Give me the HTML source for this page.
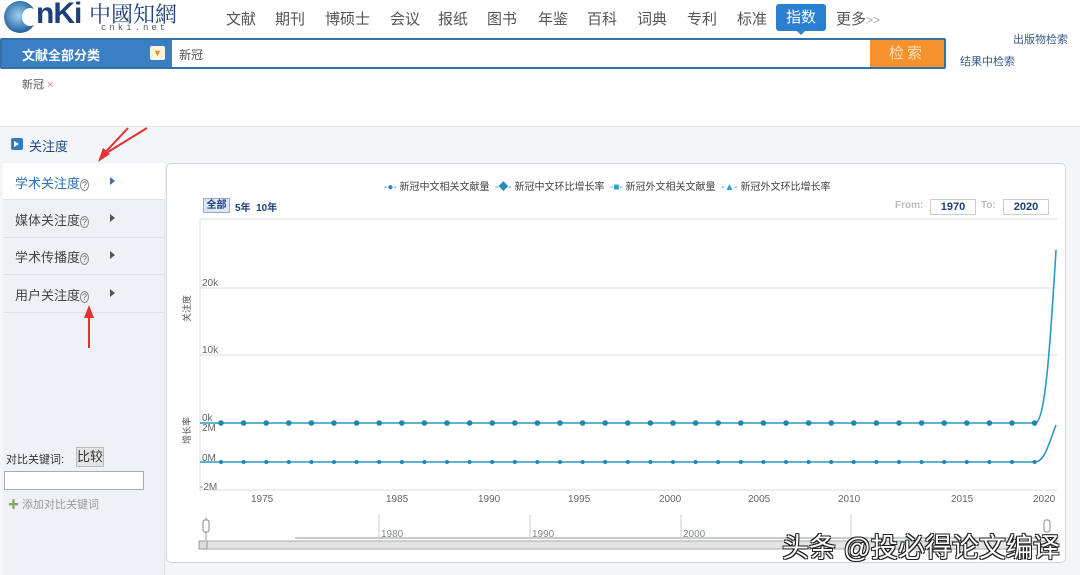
<!DOCTYPE html>
<html><head><meta charset="utf-8"><style>
*{margin:0;padding:0;box-sizing:border-box}
body{width:1080px;height:575px;overflow:hidden;background:#fff;font-family:"Liberation Sans","Noto Sans CJK SC",sans-serif;position:relative;color:#333}
.a{position:absolute;white-space:nowrap}
.nav{top:8px;font-size:15px;color:#555}
</style></head><body>
<!-- logo -->
<div class="a" style="left:4px;top:1px;width:32px;height:32px;border-radius:50%;background:radial-gradient(circle at 45% 45%,#9fd0f0,#2a6aa8 65%,#1a3f70);"></div>
<div class="a" style="left:22px;top:8px;width:16px;height:18px;background:#fff;border-radius:50%"></div>
<div class="a" style="left:36px;top:-3px;font:bold 30px 'Liberation Sans',sans-serif;color:#1d3f7a;letter-spacing:-1px">nKi</div>
<div class="a" style="left:89px;top:-2px;font:22px 'Noto Serif CJK SC',serif;color:#1d3f7a">中國知網</div>
<div class="a" style="left:101px;top:23px;font:9px 'Liberation Mono',monospace;color:#555;letter-spacing:3px">cnki.net</div>
<div class="a nav" style="left:226px">文献</div>
<div class="a nav" style="left:275px">期刊</div>
<div class="a nav" style="left:325px">博硕士</div>
<div class="a nav" style="left:390px">会议</div>
<div class="a nav" style="left:438px">报纸</div>
<div class="a nav" style="left:487px">图书</div>
<div class="a nav" style="left:538px">年鉴</div>
<div class="a nav" style="left:587px">百科</div>
<div class="a nav" style="left:637px">词典</div>
<div class="a nav" style="left:687px">专利</div>
<div class="a nav" style="left:737px">标准</div>
<div class="a" style="left:776px;top:4px;width:50px;height:27px;background:#2a7fd0;border-radius:3px;color:#fff;font-size:15px;text-align:center;line-height:27px">指数</div>
<div class="a" style="left:796px;top:30px;border:5px solid transparent;border-top-color:#2a7fd0"></div>
<div class="a nav" style="left:836px">更多<span style="color:#aaa;font-size:12px">&gt;&gt;</span></div>
<!-- search -->
<div class="a" style="left:0;top:38px;width:946px;height:31px;background:#3a7fc4;border:2px solid #3570a8;border-radius:2px"></div>
<div class="a" style="left:22px;top:45px;color:#fff;font-weight:bold;font-size:13px">文献全部分类</div>
<div class="a" style="left:150px;top:46px;width:15px;height:14px;background:#fff4dc;border-radius:2px;color:#e09020;font-size:9px;text-align:center;line-height:14px">▼</div>
<div class="a" style="left:172px;top:40px;width:698px;height:27px;background:#fff"></div>
<div class="a" style="left:179px;top:46px;font-size:12px;color:#555">新冠</div>
<div class="a" style="left:870px;top:40px;width:74px;height:27px;background:#f5922e;color:#fde0c0;font-size:15px;text-align:center;line-height:27px;letter-spacing:3px">检索</div>
<div class="a" style="left:1013px;top:31px;font-size:11px;color:#3a5a8a">出版物检索</div>
<div class="a" style="left:960px;top:53px;font-size:11px;color:#3a5a8a">结果中检索</div>
<div class="a" style="left:22px;top:76px;font-size:11px;color:#555">新冠 <span style="color:#e08090">×</span></div>
<!-- panel -->
<div class="a" style="left:0;top:126px;width:1080px;height:449px;background:#f3f5f8;border-top:1px solid #e0e4ea"></div>
<div class="a" style="left:11px;top:138px;width:12px;height:12px;background:#2a7fc4;border-radius:2px"></div>
<div class="a" style="left:14px;top:141px;border:3px solid transparent;border-left:5px solid #fff"></div>
<div class="a" style="left:29px;top:136px;font-size:13px;color:#1d4a80">关注度</div>
<div class="a" style="left:3px;top:162px;width:162px;height:413px;background:#eef2f7;border-right:1px solid #dde2ea"></div>
<div class="a" style="left:3px;top:163px;width:162px;height:37px;background:#fff;border-bottom:1px solid #dde2ea"></div>
<div class="a" style="left:3px;top:237px;width:162px;border-top:1px solid #dde2ea"></div>
<div class="a" style="left:3px;top:274px;width:162px;border-top:1px solid #dde2ea"></div>
<div class="a" style="left:3px;top:312px;width:162px;border-top:1px solid #dde2ea"></div>
<div class="a" style="left:15px;top:173px;font-size:13px;color:#2a70b0">学术关注度<span style="font-size:9px;border:1px solid #888;border-radius:50%;color:#666;padding:0 1px">?</span></div>
<div class="a" style="left:15px;top:210px;font-size:13px;color:#444">媒体关注度<span style="font-size:9px;border:1px solid #888;border-radius:50%;color:#666;padding:0 1px">?</span></div>
<div class="a" style="left:15px;top:247px;font-size:13px;color:#444">学术传播度<span style="font-size:9px;border:1px solid #888;border-radius:50%;color:#666;padding:0 1px">?</span></div>
<div class="a" style="left:15px;top:285px;font-size:13px;color:#444">用户关注度<span style="font-size:9px;border:1px solid #888;border-radius:50%;color:#666;padding:0 1px">?</span></div>
<div class="a" style="left:110px;top:177px;border:4px solid transparent;border-left:5px solid #3a70a8"></div>
<div class="a" style="left:110px;top:214px;border:4px solid transparent;border-left:5px solid #555"></div>
<div class="a" style="left:110px;top:251px;border:4px solid transparent;border-left:5px solid #555"></div>
<div class="a" style="left:110px;top:289px;border:4px solid transparent;border-left:5px solid #555"></div>
<div class="a" style="left:6px;top:451px;font-size:11px;color:#333">对比关键词:</div>
<div class="a" style="left:76px;top:447px;width:28px;height:20px;background:#e4e4e4;border:1px solid #bbb;font-size:13px;line-height:18px;text-align:center">比较</div>
<div class="a" style="left:4px;top:471px;width:140px;height:19px;background:#fff;border:1px solid #aab"></div>
<div class="a" style="left:8px;top:496px;font-size:11px;color:#999"><span style="color:#8a6">✚</span> 添加对比关键词</div>
<!-- chart -->
<div class="a" style="left:166px;top:163px;width:900px;height:400px;background:#fff;border:1px solid #cfd6de;border-radius:5px"></div>
<div class="a" style="left:384px;top:178px;font-size:10px;color:#444">
<span style="color:#2a8ab8">-●-</span> 新冠中文相关文献量 &nbsp;<span style="color:#2a8ab8">-◆-</span> 新冠中文环比增长率 &nbsp;<span style="color:#2aa0d0">-■-</span> 新冠外文相关文献量 &nbsp;<span style="color:#2aa0d0">-▲-</span> 新冠外文环比增长率</div>
<div class="a" style="left:203px;top:198px;width:27px;height:15px;background:#dde6f2;border:1px solid #9ab;font:bold 10px 'Liberation Sans','Noto Sans CJK SC',sans-serif;color:#1d3f7a;text-align:center;line-height:13px">全部</div>
<div class="a" style="left:235px;top:199px;font:bold 10px 'Liberation Sans','Noto Sans CJK SC',sans-serif;color:#1d3f7a">5年 &nbsp;10年</div>
<div class="a" style="left:895px;top:200px;font:bold 10px 'Liberation Sans',sans-serif;color:#bbb">From:</div>
<div class="a" style="left:930px;top:199px;width:46px;height:16px;border:1px solid #ccc;font:bold 11px 'Liberation Sans',sans-serif;color:#1d3f7a;text-align:center;line-height:14px">1970</div>
<div class="a" style="left:981px;top:200px;font:bold 10px 'Liberation Sans',sans-serif;color:#bbb">To:</div>
<div class="a" style="left:1003px;top:199px;width:46px;height:16px;border:1px solid #ccc;font:bold 11px 'Liberation Sans',sans-serif;color:#1d3f7a;text-align:center;line-height:14px">2020</div>
<svg class="a" style="left:0;top:0" width="1080" height="575">
<g stroke="#ddd" stroke-width="1"><line x1="200" y1="219" x2="1057" y2="219"/><line x1="200" y1="288" x2="1057" y2="288"/><line x1="200" y1="355" x2="1057" y2="355"/><line x1="200" y1="490" x2="1057" y2="490"/><line x1="200" y1="219" x2="200" y2="490"/></g>
<g font-family="Liberation Sans" font-size="10" fill="#666"><text x="202" y="286">20k</text><text x="202" y="353">10k</text><text x="202" y="421">0k</text><text x="202" y="431">2M</text><text x="202" y="461">0M</text><text x="200" y="490">-2M</text>
<text x="251" y="502">1975</text><text x="386" y="502">1985</text><text x="478" y="502">1990</text><text x="568" y="502">1995</text><text x="659" y="502">2000</text><text x="748" y="502">2005</text><text x="838" y="502">2010</text><text x="951" y="502">2015</text><text x="1033" y="502">2020</text></g>
<text x="190" y="322" font-size="9" fill="#555" transform="rotate(-90 190 322)" font-family="Noto Sans CJK SC">关注度</text>
<text x="190" y="444" font-size="9" fill="#555" transform="rotate(-90 190 444)" font-family="Noto Sans CJK SC">增长率</text>
<path d="M200 423 H1035 C1045 423 1050 350 1056 250" stroke="#2a9ac4" stroke-width="1.6" fill="none"/>
<path d="M200 462 H1035 C1045 462 1050 440 1056 425" stroke="#2a9ac4" stroke-width="1.6" fill="none"/>
<line x1="206" y1="517" x2="206" y2="540" stroke="#999"/>
<rect x="203" y="520" width="6" height="12" rx="2" fill="#fff" stroke="#888"/>
<rect x="1044" y="520" width="6" height="12" rx="2" fill="#fff" stroke="#888"/>
<line x1="295" y1="538" x2="1050" y2="538" stroke="#8899bb"/>
<g stroke="#ccc"><line x1="379" y1="515" x2="379" y2="540"/><line x1="530" y1="515" x2="530" y2="540"/><line x1="681" y1="515" x2="681" y2="540"/><line x1="851" y1="515" x2="851" y2="540"/></g>
<g font-family="Liberation Sans" font-size="10" fill="#888"><text x="381" y="537">1980</text><text x="532" y="537">1990</text><text x="683" y="537">2000</text></g>
<rect x="199" y="541" width="858" height="8" fill="#e4e4e4" stroke="#aaa"/>
<rect x="199" y="541" width="8" height="8" fill="#ddd" stroke="#999"/>
<path d="M128 128 L100 158" stroke="#e53030" stroke-width="2"/><path d="M98 162 L103 148 L110 154Z" fill="#e53030"/>
<path d="M147 128 L108 152" stroke="#e53030" stroke-width="2"/>
<path d="M89 348 L89 315" stroke="#e53030" stroke-width="2"/><path d="M89 305 L84 318 L94 318Z" fill="#e53030"/>
</svg>
<svg class="a" style="left:0;top:0" width="1080" height="575" id="pts"></svg>
<div class="a" style="left:782px;top:526px;font-size:27px;color:#fff;text-shadow:1px 1px 0 #222,-1px -1px 0 #222,1px -1px 0 #222,-1px 1px 0 #222">头条 @投必得论文编译</div>
<script>
var s='';for(var i=0;i<37;i++){var x=221+i*22.6;s+='<circle cx="'+x+'" cy="423" r="2.8" fill="#1f86b0"/><circle cx="'+x+'" cy="462" r="2" fill="#1f86b0"/>';}
document.getElementById('pts').innerHTML=s;
</script>
</body></html>
